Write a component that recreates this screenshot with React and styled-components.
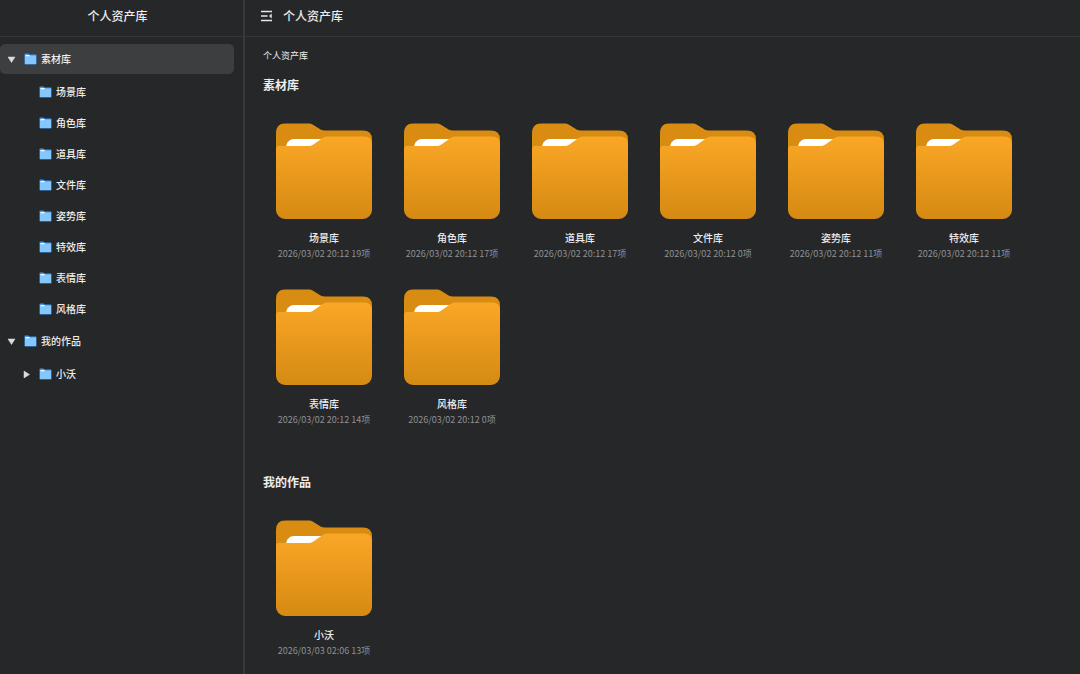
import React, { useState } from "react"
import styled, { createGlobalStyle } from "styled-components"

const GlobalStyle = createGlobalStyle`
    * {
        box-sizing: border-box;
    }
    body {
        margin: 0;
        background: #262729;
        color: #ededed;
        font-family: "Noto Sans CJK SC", "Noto Sans", sans-serif;
    }
    button {
        padding: 0;
        border: 0;
        background: none;
        color: inherit;
        font: inherit;
        cursor: pointer;
    }
    ul {
        margin: 0;
        padding: 0;
        list-style: none;
    }
`

const Page = styled.div`
    display: grid;
    grid-template-columns: 245px 1fr;
    min-height: 100vh;
`

const Sidebar = styled.aside`
    border-right: 2px solid #38393b;
`

const Header = styled.header`
    display: flex;
    align-items: center;
    justify-content: ${(props) => (props.$centered ? "center" : "flex-start")};
    gap: 10px;
    height: 37px;
    padding: 0 ${(props) => (props.$centered ? "8px 4px 0" : "15px 4px")};
    border-bottom: 1px solid #353638;
`

const Title = styled.h1`
    margin: 0;
    font-size: 12px;
    line-height: 18px;
    font-weight: 500;
`

const Tree = styled.ul`
    padding: 7px 9px 0 0;
`

const Branch = styled.ul`
    padding: 2px 0 1px;
`

const Node = styled.button`
    display: flex;
    align-items: center;
    width: 100%;
    height: 30px;
    margin-bottom: 1px;
    padding-left: ${(props) => 7 + props.$level * 15}px;
    border-radius: 5px;
    background: ${(props) => (props.$active ? "#3d3e40" : "transparent")};
    font-size: 10px;
    line-height: 16px;
    font-weight: 500;
    text-align: left;

    &:hover {
        background: #3d3e40;
    }
`

const Arrow = styled.svg`
    width: 9px;
    height: 9px;
    margin-right: 8px;
    transform: rotate(${(props) => (props.$open ? "90deg" : "0deg")});
    visibility: ${(props) => (props.$hidden ? "hidden" : "visible")};
`

const SmallFolder = styled.svg`
    width: 13px;
    height: 12px;
    margin-right: 4px;
`

const MenuButton = styled.button`
    display: flex;
`

const Content = styled.div`
    padding: 11px 18px 0;
`

const Breadcrumb = styled.a`
    display: block;
    width: max-content;
    color: inherit;
    font-size: 9px;
    line-height: 16px;
    text-decoration: none;
`

const Section = styled.section`
    padding-top: 12px;
    margin-bottom: 21px;
`

const SectionTitle = styled.h2`
    margin: 0 0 20px;
    font-size: 12px;
    line-height: 18px;
    font-weight: 700;
`

const Grid = styled.div`
    display: grid;
    grid-template-columns: repeat(auto-fill, 122px);
    gap: 6px;
`

const Card = styled.button`
    display: flex;
    flex-direction: column;
    align-items: center;
    height: 160px;
    padding-top: 9px;
`

const BigFolder = styled.svg`
    width: 96px;
    height: 96px;
    margin-bottom: 11px;
`

const Name = styled.span`
    font-size: 10px;
    line-height: 16px;
    font-weight: 500;
`

const Info = styled.span`
    color: #8f9092;
    font-size: 9px;
    line-height: 16px;
    white-space: nowrap;
`

const library = [
    { name: "场景库", date: "2026/03/02 20:12", count: 19 },
    { name: "角色库", date: "2026/03/02 20:12", count: 17 },
    { name: "道具库", date: "2026/03/02 20:12", count: 17 },
    { name: "文件库", date: "2026/03/02 20:12", count: 0 },
    { name: "姿势库", date: "2026/03/02 20:12", count: 11 },
    { name: "特效库", date: "2026/03/02 20:12", count: 11 },
    { name: "表情库", date: "2026/03/02 20:12", count: 14 },
    { name: "风格库", date: "2026/03/02 20:12", count: 0 },
]

const works = [{ name: "小沃", date: "2026/03/03 02:06", count: 13, expandable: true }]

const groups = [
    { name: "素材库", items: library },
    { name: "我的作品", items: works },
]

const FolderIcon = () => (
    <BigFolder viewBox="0 0 96 96" aria-hidden="true">
        <defs>
            <linearGradient id="front" x1="0" y1="0" x2="0" y2="1">
                <stop offset="0" stopColor="#faa726" />
                <stop offset="1" stopColor="#d58a12" />
            </linearGradient>
        </defs>
        <path d="M0 10Q0 .5 9 .5h24q2 0 4 1.200l8 5Q46.500 7.500 49 7.500h38q9 0 9 9V60H0z" fill="#d88c12" />
        <path d="M10 24c.5-5 4-8 8-8h31v10H10z" fill="#fff" />
        <path d="M0 26q0-3 3-3h30q2 0 4-1.300l10-7q2-1.200 5-1.200h36q8 0 8 8V87a9 9 0 0 1-9 9H9a9 9 0 0 1-9-9z" fill="url(#front)" />
    </BigFolder>
)

const TreeNode = ({ name, level, active, open, leaf, onClick }) => (
    <Node $level={level} $active={active} onClick={onClick}>
        <Arrow viewBox="0 0 9 9" $open={open} $hidden={leaf} aria-hidden="true">
            <path d="M2 1v7L7.500 4.500z" fill="#dcdcdc" stroke="#dcdcdc" strokeWidth="0.500" strokeLinejoin="round" />
        </Arrow>
        <SmallFolder viewBox="0 0 13 12" aria-hidden="true">
            <path d="M.5 1.300Q.5.5 1.300.5h3.200l1 1h6.200q.8 0 .8.8v8.400q0 .8-.8.8H1.300q-.8 0-.8-.8z" fill="#3d98ee" />
            <path d="M1 3.200l.8-.7h10.200v8.500H1z" fill="#84c7ff" />
            <path d="M1.500 2h4.500l-1 1.200H1.500z" fill="#fff" />
        </SmallFolder>
        {name}
    </Node>
)

const App = () => {
    const [selected, setSelected] = useState("素材库")

    return (
        <Page>
            <GlobalStyle />
            <Sidebar>
                <Header $centered>
                    <Title as="h2">个人资产库</Title>
                </Header>
                <Tree>
                    {groups.map((group) => (
                        <li key={group.name}>
                            <TreeNode
                                name={group.name}
                                level={0}
                                open
                                active={selected === group.name}
                                onClick={() => setSelected(group.name)}
                            />
                            <Branch>
                                {group.items.map((item) => (
                                    <li key={item.name}>
                                        <TreeNode
                                            name={item.name}
                                            level={1}
                                            leaf={!item.expandable}
                                            active={selected === item.name}
                                            onClick={() => setSelected(item.name)}
                                        />
                                    </li>
                                ))}
                            </Branch>
                        </li>
                    ))}
                </Tree>
            </Sidebar>
            <main>
                <Header>
                    <MenuButton aria-label="收起侧栏">
                        <svg width="13" height="12" viewBox="0 0 13 12" aria-hidden="true">
                            <path d="M1 1.500h11M1 6h6.500M1 10.500h11" fill="none" stroke="#e6e6e6" strokeWidth="1.400" />
                            <path d="M11.500 4v4L9.300 6z" fill="#e6e6e6" stroke="#e6e6e6" strokeWidth="0.500" />
                        </svg>
                    </MenuButton>
                    <Title>个人资产库</Title>
                </Header>
                <Content>
                    <Breadcrumb href="#">个人资产库</Breadcrumb>
                    {groups.map((group) => (
                        <Section key={group.name}>
                            <SectionTitle>{group.name}</SectionTitle>
                            <Grid>
                                {group.items.map((item) => (
                                    <Card key={item.name}>
                                        <FolderIcon />
                                        <Name>{item.name}</Name>
                                        <Info>
                                            {item.date} {item.count}项
                                        </Info>
                                    </Card>
                                ))}
                            </Grid>
                        </Section>
                    ))}
                </Content>
            </main>
        </Page>
    )
}

export default App
